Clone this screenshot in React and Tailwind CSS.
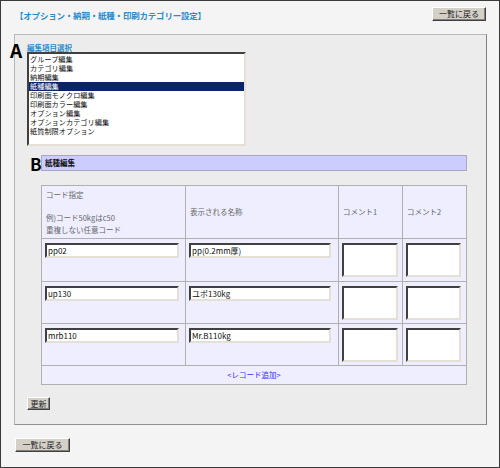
const font = { fontFamily: '"Noto Sans CJK JP", "Noto Sans", sans-serif' }

const items = [
  "グループ編集",
  "カテゴリ編集",
  "納期編集",
  "紙種編集",
  "印刷面モノクロ編集",
  "印刷面カラー編集",
  "オプション編集",
  "オプションカテゴリ編集",
  "紙質制限オプション",
]

const rows = [
  { code: "pp02", name: "pp(0.2mm厚)" },
  { code: "up130", name: "ユポ130kg" },
  { code: "mrb110", name: "Mr.B110kg" },
]

function WinButton({ children, className = "" }) {
  return (
    <button
      type="button"
      className={
        "block bg-[#d4d0c8] text-[#222] text-[8px] leading-none border border-t-white border-l-white border-r-[#404040] border-b-[#404040] shadow-[inset_-1px_-1px_0_#808080] " +
        className
      }
    >
      {children}
    </button>
  )
}

const inset =
  "bg-white border-2 border-t-[#404040] border-l-[#404040] border-r-[#e4e0d8] border-b-[#e4e0d8]"

export default function App() {
  return (
    <div
      className="relative w-[500px] h-[468px] bg-[#f4f4f4] border border-[#3a3a3a] overflow-hidden"
      style={font}
    >
      <div className="flex items-start justify-between pl-[14px] pr-[13px] pt-[6px] h-[33px]">
        <h1 className="mt-[3px] text-[8.5px] font-bold text-[#2a8ccc] leading-[10px] tracking-[-0.2px]">
          【オプション・納期・紙種・印刷カテゴリー設定】
        </h1>
        <WinButton className="w-[54px] h-[14px]">一覧に戻る</WinButton>
      </div>

      <div className="relative ml-[13px] w-[473px] bg-[#ececec] border border-t-[#b8b8b8] border-l-[#b8b8b8] border-r-[#808080] border-b-[#909090] pl-[12px] pt-[8px] pb-[14px]">
        <span className="absolute left-[-5px] top-[5px] text-[19px] font-bold leading-none text-black">
          A
        </span>
        <div className="text-[7.5px] font-bold leading-[9px] text-[#2a8ccc]">編集項目選択</div>
        <div className={"w-[219px] h-[94px] " + inset + " py-[1px]"}>
          {items.map((it, i) => (
            <div
              key={it}
              className={
                "h-[9px] leading-[9px] text-[7.2px] pl-[1px] " +
                (i === 3 ? "bg-[#0a246a] text-white" : "text-[#111]")
              }
            >
              {it}
            </div>
          ))}
        </div>

        <div className="relative ml-[14px] mt-[9px] w-[426px] h-[16px] bg-[#ccccff] border border-[#a8a8c0] flex items-center pl-[3px]">
          <span className="absolute left-[-12px] top-[-1px] text-[17px] font-bold leading-none text-black">
            B
          </span>
          <span className="text-[7.5px] font-bold text-[#111] leading-none">紙種編集</span>
        </div>

        <table className="ml-[14px] mt-[14px] w-[426px] table-fixed border-collapse bg-[#eeeeff] border border-[#a0a0a0] text-[7.5px] text-[#666]">
          <colgroup>
            <col className="w-[144px]" />
            <col className="w-[153px]" />
            <col className="w-[64px]" />
            <col className="w-[64px]" />
          </colgroup>
          <tbody>
            <tr className="h-[53px]">
              <td className="border border-[#b0b0b0] px-[4px] align-middle leading-[11.5px]">
                コード指定
                <br />
                <br />
                例)コード50kgはc50
                <br />
                重複しない任意コード
              </td>
              <td className="border border-[#b0b0b0] px-[4px] align-middle">表示される名称</td>
              <td className="border border-[#b0b0b0] px-[4px] align-middle">コメント1</td>
              <td className="border border-[#b0b0b0] px-[4px] align-middle">コメント2</td>
            </tr>
            {rows.map((r, i) => (
              <tr key={r.code} className={i === 0 ? "h-[43px]" : "h-[42px]"}>
                <td className="border border-[#b0b0b0] px-[3px] pt-[4px] align-top">
                  <div className={"w-[134px] h-[15px] " + inset + " text-[8px] text-[#111] leading-[11px] pl-[1px]"}>
                    {r.code}
                  </div>
                </td>
                <td className="border border-[#b0b0b0] px-[3px] pt-[4px] align-top">
                  <div className={"w-[142px] h-[15px] " + inset + " text-[8px] text-[#111] leading-[11px] pl-[1px]"}>
                    {r.name}
                  </div>
                </td>
                <td className="border border-[#b0b0b0] px-[3px] pt-[4px] align-top">
                  <div className={"w-[56px] h-[34px] " + inset}></div>
                </td>
                <td className="border border-[#b0b0b0] px-[3px] pt-[4px] align-top">
                  <div className={"w-[55px] h-[34px] " + inset}></div>
                </td>
              </tr>
            ))}
            <tr className="h-[19px]">
              <td colSpan={4} className="border border-[#b0b0b0] text-center align-middle text-[#3030ff]">
                &lt;レコード追加&gt;
              </td>
            </tr>
          </tbody>
        </table>

        <WinButton className="mt-[12px] w-[23px] h-[13px]">更新</WinButton>
      </div>

      <div className="pl-[14px] pt-[13px]">
        <WinButton className="w-[55px] h-[14px]">一覧に戻る</WinButton>
      </div>
    </div>
  )
}
